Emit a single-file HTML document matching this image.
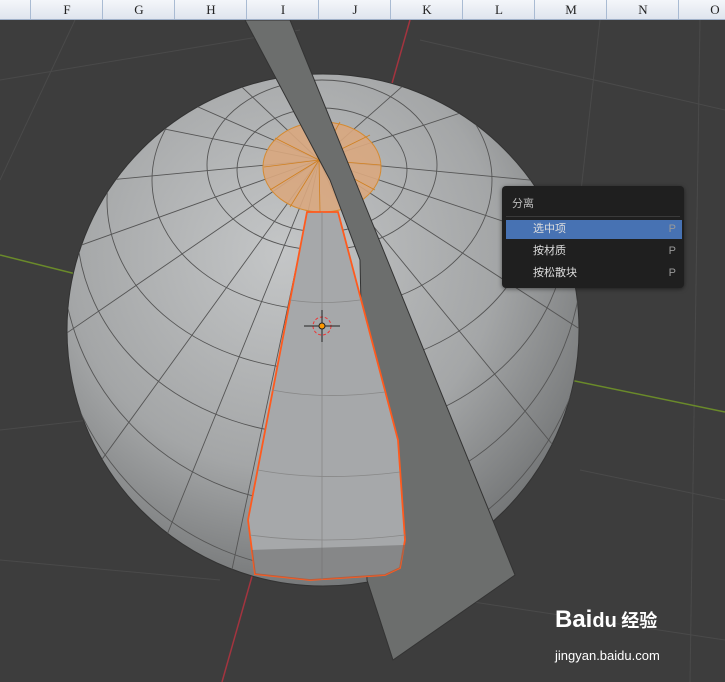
<!DOCTYPE html>
<html><head><meta charset="utf-8"><style>
html,body{margin:0;padding:0;width:725px;height:682px;overflow:hidden;background:#3d3d3d;font-family:"Liberation Sans","Noto Sans CJK SC",sans-serif}
.hdr{position:absolute;left:0;top:0;width:725px;height:19px;background:linear-gradient(#f4f6fa,#dfe5ee);border-bottom:1px solid #9fb0c8;overflow:hidden}
.hdr div{position:absolute;top:0;height:19px;width:72px;border-left:1px solid #a9bbd3;text-align:center;font:13px "Liberation Serif",serif;line-height:20px;color:#222}
.menu{position:absolute;left:502px;top:186px;width:182px;height:102px;background:#1f1f1f;border-radius:4px;box-shadow:0 1px 4px rgba(0,0,0,.5);font-size:11px;color:#ddd}
.menu .t{position:absolute;left:10px;top:9px;color:#bbb}
.menu .sep{position:absolute;left:4px;right:4px;top:30px;height:1px;background:#3a3a3a}
.menu .it{position:absolute;left:4px;width:176px;height:19px;line-height:19px}
.menu .it span{position:absolute;left:27px}
.menu .it b{position:absolute;right:6px;font-weight:normal;color:#999}
.sel{background:#4772b3}
.wm{position:absolute;left:555px;top:605px;color:#fff;font-weight:bold;line-height:30px}
</style></head><body>
<svg width="725" height="682" style="position:absolute;left:0;top:0">
<defs>
<radialGradient id="g" cx="0.42" cy="0.35" r="0.7"><stop offset="0" stop-color="#c4c6c7"/><stop offset="0.6" stop-color="#a4a6a7"/><stop offset="1" stop-color="#6e7071"/></radialGradient>
<clipPath id="c"><circle cx="323" cy="330" r="256"/></clipPath>
</defs>
<g stroke="#4a4a4a" stroke-width="1" fill="none">
<line x1="0" y1="80" x2="300" y2="30"/><line x1="0" y1="430" x2="90" y2="420"/><line x1="0" y1="560" x2="220" y2="580"/>
<line x1="75" y1="20" x2="0" y2="180"/><line x1="600" y1="20" x2="580" y2="200"/><line x1="580" y1="470" x2="725" y2="500"/>
<line x1="420" y1="40" x2="725" y2="110"/><line x1="460" y1="600" x2="725" y2="640"/><line x1="700" y1="20" x2="690" y2="682"/>
</g>
<line x1="410" y1="20" x2="222" y2="682" stroke="#a3343f" stroke-width="1.5"/>
<line x1="0" y1="255" x2="80" y2="275" stroke="#6a8a2a" stroke-width="1.5"/>
<line x1="570" y1="380" x2="725" y2="412" stroke="#6a8a2a" stroke-width="1.5"/>
<circle cx="323" cy="330" r="256" fill="url(#g)" stroke="#333" stroke-width="1"/>
<g clip-path="url(#c)" stroke="#555" stroke-width="0.9" fill="none">
<ellipse cx="322" cy="165" rx="115" ry="85"/><ellipse cx="322" cy="180" rx="170" ry="130"/>
<ellipse cx="322" cy="200" rx="215" ry="170"/><ellipse cx="322" cy="225" rx="245" ry="210"/>
<ellipse cx="322" cy="255" rx="260" ry="250"/><ellipse cx="322" cy="285" rx="270" ry="285"/>
<ellipse cx="322" cy="170" rx="85" ry="62"/>
<line x1="319" y1="160" x2="-100" y2="200"/><line x1="319" y1="160" x2="-60" y2="420"/><line x1="319" y1="160" x2="0" y2="600"/>
<line x1="319" y1="160" x2="100" y2="700"/><line x1="319" y1="160" x2="200" y2="720"/><line x1="319" y1="160" x2="740" y2="200"/>
<line x1="319" y1="160" x2="720" y2="420"/><line x1="319" y1="160" x2="680" y2="600"/><line x1="319" y1="160" x2="560" y2="700"/>
<line x1="319" y1="160" x2="0" y2="20"/><line x1="319" y1="160" x2="150" y2="0"/><line x1="319" y1="160" x2="500" y2="0"/><line x1="319" y1="160" x2="680" y2="40"/>
<line x1="319" y1="160" x2="-80" y2="80"/><line x1="319" y1="160" x2="740" y2="300"/><line x1="319" y1="160" x2="-100" y2="310"/>
</g>
<ellipse cx="322" cy="167" rx="59" ry="45" fill="#d9a77e" fill-opacity="0.9" stroke="#d58a30"/>
<g stroke="#d08020" stroke-width="0.8">
<line x1="319" y1="160" x2="264" y2="167"/><line x1="319" y1="160" x2="270" y2="190"/><line x1="319" y1="160" x2="290" y2="207"/><line x1="319" y1="160" x2="320" y2="212"/>
<line x1="319" y1="160" x2="350" y2="209"/><line x1="319" y1="160" x2="375" y2="190"/><line x1="319" y1="160" x2="381" y2="165"/><line x1="319" y1="160" x2="370" y2="135"/>
<line x1="319" y1="160" x2="340" y2="122"/><line x1="319" y1="160" x2="300" y2="122"/><line x1="319" y1="160" x2="275" y2="138"/>
</g>
<polygon points="245,20 290,20 515,575 393,660 367,580 360,260 330,180" fill="#6c6e6d" stroke="#333"/>
<path d="M307,212 L338,212 L398,440 L405,540 L400,568 L385,575 L310,580 L255,574 L248,520 Z" fill="#a6a8aa" stroke="#ff5a1e" stroke-width="1.8"/>
<g stroke="#888" stroke-width="0.8" fill="none">
<path d="M290,300 Q322,305 360,300"/><path d="M272,390 Q322,400 385,392"/><path d="M258,470 Q322,482 400,472"/><path d="M250,535 Q322,545 405,535"/>
<line x1="322" y1="212" x2="322" y2="580"/>
</g>
<path d="M252,550 L405,545 L400,568 L385,575 L310,580 L255,574 Z" fill="#666" opacity="0.5"/>
<g transform="translate(322,326)"><circle r="9" fill="none" stroke="#e33" stroke-dasharray="3,2"/><line x1="-18" y1="0" x2="18" y2="0" stroke="#222"/><line x1="0" y1="-16" x2="0" y2="16" stroke="#222"/><circle r="3" fill="#f90" stroke="#222"/></g>
</svg>
<div class="hdr">
<div style="left:-50px"></div><div style="left:30px">F</div><div style="left:102px">G</div><div style="left:174px">H</div><div style="left:246px">I</div><div style="left:318px">J</div><div style="left:390px">K</div><div style="left:462px">L</div><div style="left:534px">M</div><div style="left:606px">N</div><div style="left:678px">O</div>
</div>
<div class="menu"><div class="t">分离</div><div class="sep"></div>
<div class="it sel" style="top:34px"><span>选中项</span><b>P</b></div>
<div class="it" style="top:56px"><span>按材质</span><b>P</b></div>
<div class="it" style="top:78px"><span>按松散块</span><b>P</b></div>
</div>
<div class="wm"><span style="font-size:24px">Bai</span><span style="font-size:20px">du</span> <span style="font-size:18px">经验</span></div>
<div style="position:absolute;left:555px;top:648px;color:#fff;font-size:13px">jingyan.baidu.com</div>
</body></html>
